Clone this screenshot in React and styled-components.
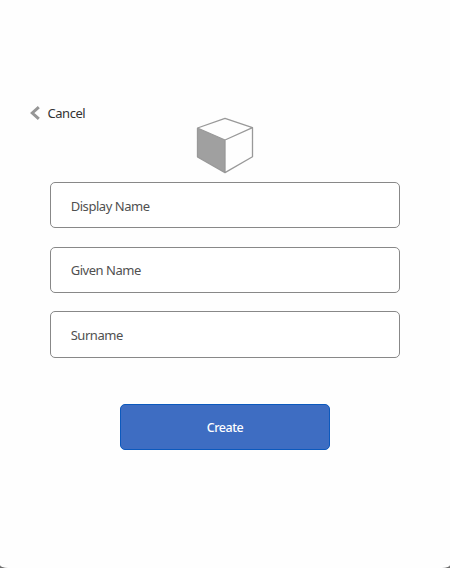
import React from "react";
import styled, { createGlobalStyle } from "styled-components";

const GlobalStyle = createGlobalStyle`
  * { box-sizing: border-box; }
  body { margin: 0; background: #6b6b6b; overflow: hidden; }
`;

const Card = styled.main`
  display: flex;
  flex-direction: column;
  width: 450px;
  height: 568px;
  padding: 103px 50px 0;
  background: #fefefe;
  border-radius: 0 0 8px 8px / 0 0 3px 3px;
  font-family: "Noto Sans", "Open Sans", sans-serif;
  font-size: 13px;
  line-height: 20px;
  color: #333;
`;

const Cancel = styled.button`
  display: flex;
  align-items: center;
  align-self: flex-start;
  gap: 7px;
  height: 20px;
  margin-left: -20.5px;
  padding: 0;
  border: 0;
  background: none;
  font: inherit;
  letter-spacing: -0.45px;
  color: #333;
`;

const Logo = styled.svg`
  display: block;
  align-self: center;
  flex: none;
  margin: -7px 0 8px;
`;

const Fields = styled.div`
  display: grid;
  grid-auto-rows: 46.4px;
  gap: 18.2px;
  margin-bottom: 46.6px;
`;

const Field = styled.input`
  width: 100%;
  padding: 1px 20px 0 19.7px;
  border: 1px solid #888;
  border-radius: 5px;
  outline: 0;
  background: #fff;
  font: inherit;
  letter-spacing: -0.46px;
  color: #444;
  &::placeholder { color: #505050; opacity: 1; }
`;

const Submit = styled.button`
  align-self: center;
  width: 210px;
  height: 46px;
  padding: 2px 0 0;
  border: 1px solid #0c59bd;
  border-radius: 5px;
  background: #3e6dc2;
  font: inherit;
  font-size: 12.5px;
  font-weight: 500;
  letter-spacing: -0.45px;
  color: #fff;
`;

export default function App() {
  return (
    <>
      <GlobalStyle />
      <Card>
        <Cancel type="button">
          <svg width="11" height="14" viewBox="0 0 11 14" fill="none">
            <path d="M8.8 1.2L2.3 7l6.5 5.8" stroke="#969696" strokeWidth="3" />
          </svg>
          Cancel
        </Cancel>
        <Logo width="58" height="58" viewBox="0 0 58 58">
          <path d="M1.5 12L29 24v32.6L1.5 41z" fill="#a0a0a0" />
          <path
            d="M1.5 12L29 2.3 56.5 11.7v29L29 56.6 1.5 41zM1.5 12L29 24l27.5-12.3M29 24v32"
            fill="none"
            stroke="#999"
            strokeWidth="1.3"
            strokeLinejoin="round"
          />
        </Logo>
        <Fields>
          <Field placeholder="Display Name" />
          <Field placeholder="Given Name" />
          <Field placeholder="Surname" />
        </Fields>
        <Submit type="button">Create</Submit>
      </Card>
    </>
  );
}
